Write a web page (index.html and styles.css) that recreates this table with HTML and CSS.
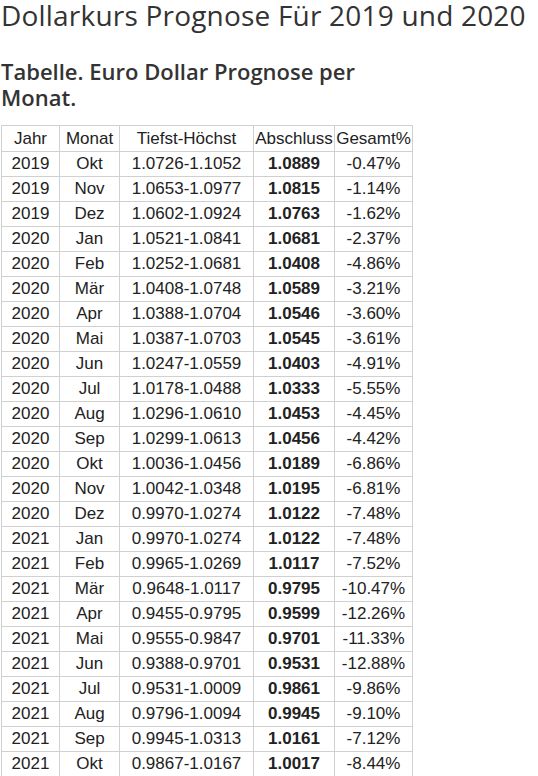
FILE: index.html
```html
<!DOCTYPE html>
<html lang="de">
<head>
<meta charset="utf-8">
<title>Dollarkurs Prognose</title>
<link rel="stylesheet" href="styles.css">
</head>
<body>
<h1 class="title">Dollarkurs Prognose Für 2019 und 2020</h1>
<h2 class="subtitle">Tabelle. Euro Dollar Prognose per Monat.</h2>
<table class="forecast">
<colgroup>
<col class="c-jahr"><col class="c-monat"><col class="c-range"><col class="c-close"><col class="c-total">
</colgroup>
<thead>
<tr><th>Jahr</th><th>Monat</th><th>Tiefst-Höchst</th><th>Abschluss</th><th>Gesamt%</th></tr>
</thead>
<tbody>
<tr><td>2019</td><td>Okt</td><td>1.0726-1.1052</td><td class="b">1.0889</td><td>-0.47%</td></tr>
<tr><td>2019</td><td>Nov</td><td>1.0653-1.0977</td><td class="b">1.0815</td><td>-1.14%</td></tr>
<tr><td>2019</td><td>Dez</td><td>1.0602-1.0924</td><td class="b">1.0763</td><td>-1.62%</td></tr>
<tr><td>2020</td><td>Jan</td><td>1.0521-1.0841</td><td class="b">1.0681</td><td>-2.37%</td></tr>
<tr><td>2020</td><td>Feb</td><td>1.0252-1.0681</td><td class="b">1.0408</td><td>-4.86%</td></tr>
<tr><td>2020</td><td>Mär</td><td>1.0408-1.0748</td><td class="b">1.0589</td><td>-3.21%</td></tr>
<tr><td>2020</td><td>Apr</td><td>1.0388-1.0704</td><td class="b">1.0546</td><td>-3.60%</td></tr>
<tr><td>2020</td><td>Mai</td><td>1.0387-1.0703</td><td class="b">1.0545</td><td>-3.61%</td></tr>
<tr><td>2020</td><td>Jun</td><td>1.0247-1.0559</td><td class="b">1.0403</td><td>-4.91%</td></tr>
<tr><td>2020</td><td>Jul</td><td>1.0178-1.0488</td><td class="b">1.0333</td><td>-5.55%</td></tr>
<tr><td>2020</td><td>Aug</td><td>1.0296-1.0610</td><td class="b">1.0453</td><td>-4.45%</td></tr>
<tr><td>2020</td><td>Sep</td><td>1.0299-1.0613</td><td class="b">1.0456</td><td>-4.42%</td></tr>
<tr><td>2020</td><td>Okt</td><td>1.0036-1.0456</td><td class="b">1.0189</td><td>-6.86%</td></tr>
<tr><td>2020</td><td>Nov</td><td>1.0042-1.0348</td><td class="b">1.0195</td><td>-6.81%</td></tr>
<tr><td>2020</td><td>Dez</td><td>0.9970-1.0274</td><td class="b">1.0122</td><td>-7.48%</td></tr>
<tr><td>2021</td><td>Jan</td><td>0.9970-1.0274</td><td class="b">1.0122</td><td>-7.48%</td></tr>
<tr><td>2021</td><td>Feb</td><td>0.9965-1.0269</td><td class="b">1.0117</td><td>-7.52%</td></tr>
<tr><td>2021</td><td>Mär</td><td>0.9648-1.0117</td><td class="b">0.9795</td><td>-10.47%</td></tr>
<tr><td>2021</td><td>Apr</td><td>0.9455-0.9795</td><td class="b">0.9599</td><td>-12.26%</td></tr>
<tr><td>2021</td><td>Mai</td><td>0.9555-0.9847</td><td class="b">0.9701</td><td>-11.33%</td></tr>
<tr><td>2021</td><td>Jun</td><td>0.9388-0.9701</td><td class="b">0.9531</td><td>-12.88%</td></tr>
<tr><td>2021</td><td>Jul</td><td>0.9531-1.0009</td><td class="b">0.9861</td><td>-9.86%</td></tr>
<tr><td>2021</td><td>Aug</td><td>0.9796-1.0094</td><td class="b">0.9945</td><td>-9.10%</td></tr>
<tr><td>2021</td><td>Sep</td><td>0.9945-1.0313</td><td class="b">1.0161</td><td>-7.12%</td></tr>
<tr><td>2021</td><td>Okt</td><td>0.9867-1.0167</td><td class="b">1.0017</td><td>-8.44%</td></tr>
</tbody>
</table>
</body>
</html>
```
FILE: styles.css
```css
html, body {
  margin: 0;
  padding: 0;
  background: #fff;
}
body {
  padding: 0 0 0 1px;
  color: #333;
  font-family: "Open Sans", sans-serif;
}
.title {
  margin: -3px 0 0 0;
  font-size: 28px;
  font-weight: 400;
  line-height: 36px;
  letter-spacing: 0.2px;
  color: #333;
}
.subtitle {
  margin: 25px 0 0 0;
  max-width: 400px;
  font-size: 22px;
  font-weight: 600;
  line-height: 26px;
  color: #333;
}
.forecast {
  margin-top: 15px;
  border-collapse: collapse;
  table-layout: fixed;
  width: 412px;
  font-family: "Liberation Sans", Arial, sans-serif;
  font-size: 17px;
  color: #222;
}
.c-jahr { width: 58px; }
.c-monat { width: 60px; }
.c-range { width: 134px; }
.c-close { width: 81px; }
.c-total { width: 78px; }
.forecast th,
.forecast td {
  border: 1px solid #d0d0d0;
  padding: 0;
  text-align: center;
  font-weight: 400;
  white-space: nowrap;
}
.forecast th {
  height: 25px;
  line-height: 25px;
}
.forecast td {
  height: 24px;
  line-height: 24px;
}
.forecast td.b {
  font-weight: 700;
}
```
